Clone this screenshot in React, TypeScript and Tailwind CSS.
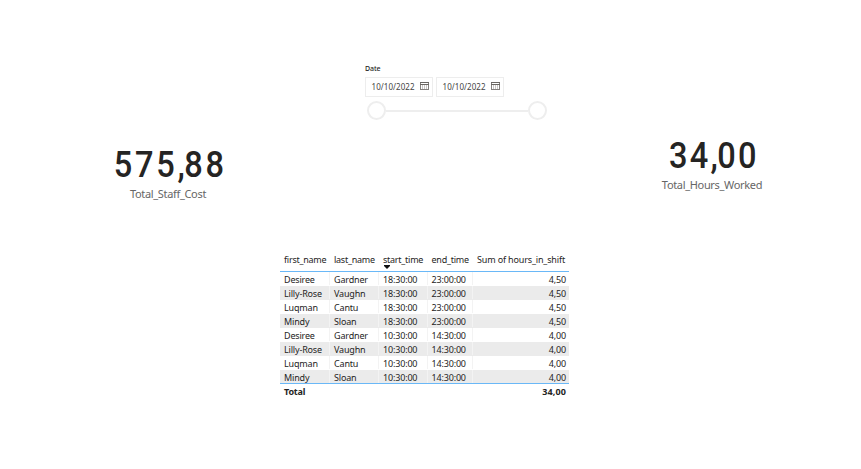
import React from "react";

const rows = [
  ["Desiree", "Gardner", "18:30:00", "23:00:00", "4,50"],
  ["Lilly-Rose", "Vaughn", "18:30:00", "23:00:00", "4,50"],
  ["Luqman", "Cantu", "18:30:00", "23:00:00", "4,50"],
  ["Mindy", "Sloan", "18:30:00", "23:00:00", "4,50"],
  ["Desiree", "Gardner", "10:30:00", "14:30:00", "4,00"],
  ["Lilly-Rose", "Vaughn", "10:30:00", "14:30:00", "4,00"],
  ["Luqman", "Cantu", "10:30:00", "14:30:00", "4,00"],
  ["Mindy", "Sloan", "10:30:00", "14:30:00", "4,00"],
];

const columns = "grid grid-cols-[50px_49px_49px_45px_96px]";

function CalendarIcon() {
  return (
    <svg width="9" height="8" viewBox="0 0 9 8" fill="none" className="mb-[2px]" shapeRendering="crispEdges">
      <path d="M0.5 0.5h8v7h-8z" stroke="#85817e" />
      <path d="M0 0.5h9M0 2.5h9" stroke="#6a6662" />
      <path d="M2.5 3v4M4.5 3v4M6.5 3v4" stroke="#c9c6c4" />
    </svg>
  );
}

function DateBox() {
  return (
    <div className="flex h-5 w-[68px] items-center justify-between border border-[#ededed] pr-[3px] pl-[5.5px]">
      <span className="text-[8px] leading-none tracking-[0.05px] text-[#444]">10/10/2022</span>
      <CalendarIcon />
    </div>
  );
}

function DateSlicer() {
  return (
    <section className="ml-[365px] w-[184px] pt-[64px]">
      <div className="h-[13px] text-[7px] leading-[10px] font-medium tracking-[-0.1px] text-[#252423]">Date</div>
      <div className="flex gap-[3px]">
        <DateBox />
        <DateBox />
      </div>
      <div className="mt-[4px] flex items-center pl-[1.5px]">
        <div className="size-[19px] rounded-full border-2 border-[#eeeeee]" />
        <div className="h-[2px] w-[142px] bg-[#eeeeee]" />
        <div className="size-[19px] rounded-full border-2 border-[#eeeeee]" />
      </div>
    </section>
  );
}

function Card({ value, label, className, valueClass }: { value: string; label: string; className: string; valueClass: string }) {
  const [whole, fraction] = value.split(",");
  return (
    <section className={"flex flex-col items-center " + className}>
      <div className={"mb-[2px] h-[38px] origin-center scale-x-[0.88] font-['Roboto',sans-serif] text-[37px] leading-[38px] font-medium whitespace-nowrap text-[#252423] " + valueClass}>
        {whole}
        <span className="tracking-[-0.6px]">,</span>
        {fraction}
      </div>
      <div className="text-[11px] leading-[16px] tracking-[-0.33px] whitespace-nowrap text-[#666]">{label}</div>
    </section>
  );
}

function ShiftTable() {
  return (
    <section className="ml-[280px] w-[289px] text-[9px] tracking-[-0.17px] text-[#252423]">
      <div className={columns + " h-[21px] border-b border-[#6ab8f7] pt-px leading-[15px] tracking-[-0.25px] whitespace-nowrap"}>
        <span className="pl-1">first_name</span>
        <span className="pl-1">last_name</span>
        <span className="pl-1">
          start_time
          <svg width="6" height="4" viewBox="0 0 6 4" className="-mt-[2px] ml-px" fill="#111">
            <path d="M0 0h6v1L3 4L0 1z" />
          </svg>
        </span>
        <span className="pl-[3.5px]">end_time</span>
        <span className="pr-1 text-right tracking-[-0.15px]">Sum of hours_in_shift</span>
      </div>
      <div className="border-b border-[#6ab8f7]">
        {rows.map((row, i) => (
          <div key={i} className={columns + " leading-[15px] " + (i === 7 ? "h-[13px] " : "h-[14px] ") + (i % 2 ? "bg-[#ebebeb]" : "bg-white")}>
            {row.map((cell, j) => (
              <span
                key={j}
                className={
                  j === 4
                    ? "h-[13px] pr-[3px] text-right"
                    : j === 3
                      ? "h-[13px] border-r border-[#f3f3f3] pl-[3.5px]"
                      : "h-[13px] border-r border-[#f3f3f3] pl-1"
                }
              >
                {cell}
              </span>
            ))}
          </div>
        ))}
      </div>
      <div className="flex justify-between pr-[3px] pl-1 leading-[16px] font-bold">
        <span>Total</span>
        <span className="tracking-[0.1px]">34,00</span>
      </div>
    </section>
  );
}

export default function App() {
  return (
    <main className="h-[469px] w-[861px] overflow-hidden bg-white font-['Noto_Sans',sans-serif]">
      <div className="h-[120px]">
        <DateSlicer />
      </div>
      <div className="flex h-[131px] items-start">
        <Card value="575,88" label="Total_Staff_Cost" className="mt-[26px] ml-[108px] w-[120px]" valueClass="ml-[4px] tracking-[3.1px]" />
        <Card value="34,00" label="Total_Hours_Worked" className="mt-[17px] ml-[424px] w-[120px]" valueClass="ml-[3px] tracking-[2.5px]" />
      </div>
      <ShiftTable />
    </main>
  );
}
